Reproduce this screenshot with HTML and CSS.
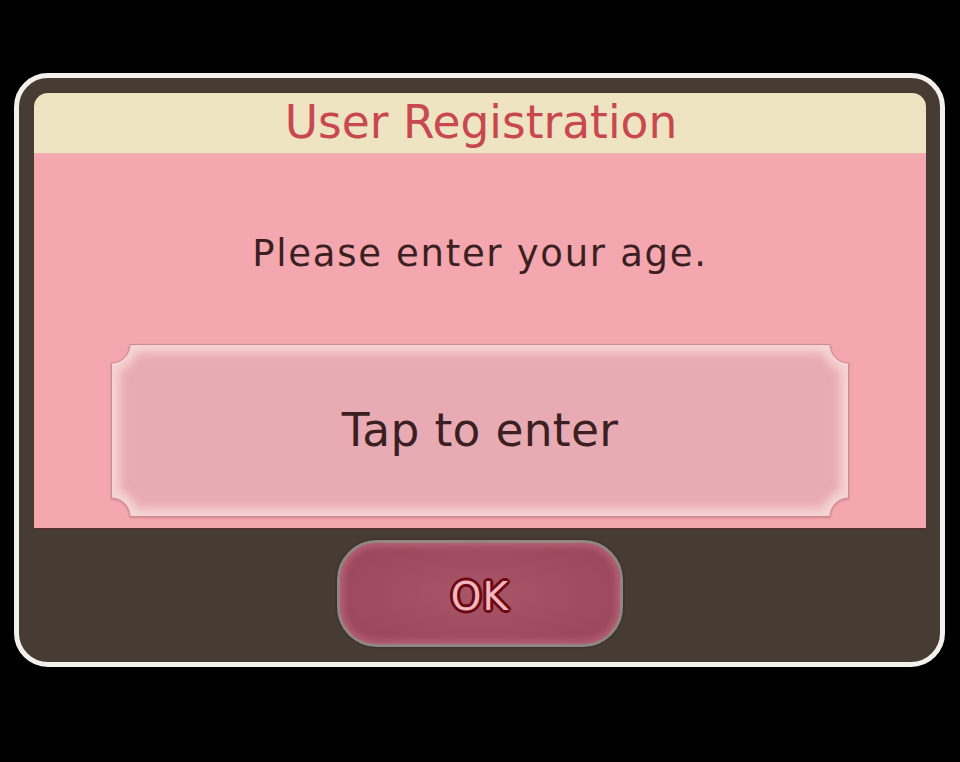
FILE: index.html
```html
<!DOCTYPE html>
<html lang="en">
<head>
<meta charset="utf-8">
<title>User Registration</title>
<link rel="stylesheet" href="styles.css">
</head>
<body>
  <div class="dialog">
    <div class="panel">
      <header class="head">
        <h1 class="title">User Registration</h1>
      </header>
      <div class="content">
        <p class="prompt">Please enter your age.</p>
        <div class="ticket">
          <svg class="ticket-shape" width="738" height="173" viewBox="0 0 738 173" aria-hidden="true">
            <defs>
              <clipPath id="tk">
                <path d="M19 0.5 H719 A18.5 18.5 0 0 0 737.5 19 V154 A18.5 18.5 0 0 0 719 172.5 H19 A18.5 18.5 0 0 0 0.5 154 V19 A18.5 18.5 0 0 0 19 0.5 Z"/>
              </clipPath>
              <filter id="blur" x="-5%" y="-20%" width="110%" height="140%">
                <feGaussianBlur stdDeviation="5"/>
              </filter>
            </defs>
            <path d="M19 0.5 H719 A18.5 18.5 0 0 0 737.5 19 V154 A18.5 18.5 0 0 0 719 172.5 H19 A18.5 18.5 0 0 0 0.5 154 V19 A18.5 18.5 0 0 0 19 0.5 Z" fill="#e9abb3"/>
            <g clip-path="url(#tk)">
              <path d="M19 0.5 H719 A18.5 18.5 0 0 0 737.5 19 V154 A18.5 18.5 0 0 0 719 172.5 H19 A18.5 18.5 0 0 0 0.5 154 V19 A18.5 18.5 0 0 0 19 0.5 Z" fill="none" stroke="#f6d6d6" stroke-width="16" filter="url(#blur)"/>
            </g>
            <path d="M19 0.5 H719 A18.5 18.5 0 0 0 737.5 19 V154 A18.5 18.5 0 0 0 719 172.5 H19 A18.5 18.5 0 0 0 0.5 154 V19 A18.5 18.5 0 0 0 19 0.5 Z" fill="none" stroke="#c98d94" stroke-width="1"/>
          </svg>
          <span class="ticket-label">Tap to enter</span>
        </div>
      </div>
    </div>
    <div class="actions">
      <button class="ok" type="button">OK</button>
    </div>
  </div>
</body>
</html>
```

FILE: styles.css
```css
html, body {
  margin: 0;
  padding: 0;
  background: #000000;
}

body {
  width: 960px;
  height: 762px;
  overflow: hidden;
  font-family: "DejaVu Sans", "Noto Sans", sans-serif;
}

.dialog {
  box-sizing: border-box;
  margin: 73px 0 0 14px;
  width: 931px;
  height: 594px;
  border: 5px solid #f4f0eb;
  border-radius: 34px;
  background: #463c33;
  padding: 15px 14px 0 15px;
  display: flex;
  flex-direction: column;
}

.panel {
  height: 435px;
  border-radius: 14px 14px 0 0;
  overflow: hidden;
  display: flex;
  flex-direction: column;
  box-shadow: 0 1px 0 #5a2a26;
}

.head {
  height: 61px;
  background: #eee4c2;
  border-bottom: 1px solid #e6b7a8;
  box-sizing: border-box;
  display: flex;
  justify-content: center;
}

.title {
  margin: 0;
  font-size: 45.5px;
  font-weight: normal;
  line-height: 59px;
  color: #c9484f;
  padding-left: 2px;
}

.content {
  flex: 1;
  background: #f4a7ae;
  display: flex;
  flex-direction: column;
  align-items: center;
  padding-top: 80px;
  box-sizing: border-box;
}

.prompt {
  margin: 0;
  font-size: 37px;
  line-height: 40px;
  letter-spacing: 1.7px;
  color: #3b1f22;
}

.ticket {
  position: relative;
  margin-top: 70px;
  width: 738px;
  height: 173px;
  display: flex;
  align-items: center;
  justify-content: center;
}

.ticket-shape {
  position: absolute;
  left: 0;
  top: 0;
  filter: drop-shadow(0 1px 1px rgba(150, 70, 80, 0.35));
}

.ticket-label {
  position: relative;
  font-size: 45.5px;
  line-height: 52px;
  letter-spacing: 0.3px;
  color: #3b1f22;
}

.actions {
  flex: 1;
  display: flex;
  justify-content: center;
  align-items: flex-start;
  padding-top: 12px;
}

.ok {
  box-sizing: border-box;
  width: 286px;
  height: 107px;
  border: 3px solid #928683;
  border-radius: 40px;
  background: radial-gradient(ellipse at 50% 50%, #a8566a 0%, #a04b5f 55%, #9a4458 100%);
  box-shadow: inset 0 0 8px 2px rgba(230, 150, 165, 0.45), 0 0 3px rgba(0, 0, 0, 0.4);
  font-family: "DejaVu Sans", sans-serif;
  font-weight: normal;
  font-size: 39px;
  letter-spacing: 1px;
  color: #f2b7bf;
  text-shadow:
    2px 0 0 #6c0912, -2px 0 0 #6c0912, 0 2px 0 #6c0912, 0 -2px 0 #6c0912,
    1.5px 1.5px 0 #6c0912, -1.5px 1.5px 0 #6c0912, 1.5px -1.5px 0 #6c0912, -1.5px -1.5px 0 #6c0912,
    3px 0 0 #6c0912, -3px 0 0 #6c0912, 0 3px 0 #6c0912, 0 -3px 0 #6c0912,
    2px 2px 0 #6c0912, -2px 2px 0 #6c0912, 2px -2px 0 #6c0912, -2px -2px 0 #6c0912;
  padding: 6px 0 0 0;
  cursor: pointer;
}
```
